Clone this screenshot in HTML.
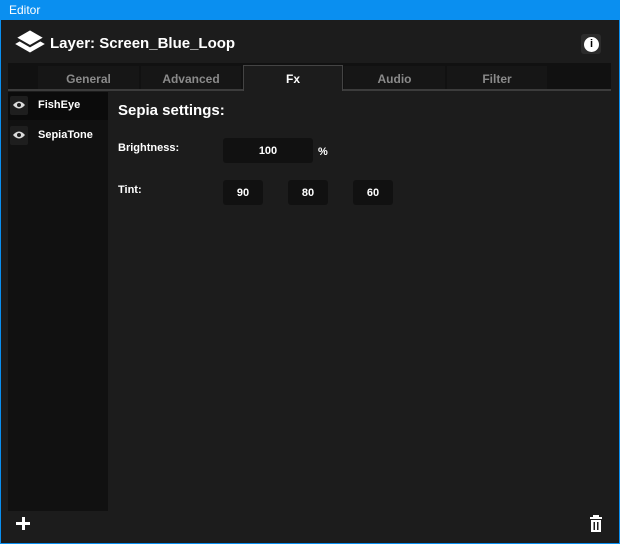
<!DOCTYPE html>
<html><head><style>
*{margin:0;padding:0;box-sizing:border-box}
body{width:620px;height:544px;background:#1c1c1c;font-family:"Liberation Sans",sans-serif;position:relative;overflow:hidden;color:#fff}
.a{position:absolute}
.frame{left:0;top:0;width:620px;height:544px;border:1px solid #0a8ff0;border-top:none}
.title{left:0;top:0;width:620px;height:20px;background:#0a8ff0;font-size:12px;line-height:20px;padding-left:9px}
.tab{top:66px;height:24px;background:#161616;color:#8a8a8a;font-size:12px;font-weight:bold;text-align:center;line-height:26px}
.box{background:#111;border-radius:3px;font-size:11px;text-align:center;font-weight:bold}
.lbl{font-size:11px;font-weight:bold}
</style></head><body>
<div class="a title">Editor</div>
<div class="a frame"></div>
<svg class="a" style="left:12px;top:29px" width="36" height="30" viewBox="0 0 34 28"><path d="M17 6 L31 14 L17 22 L3 14Z" fill="#fff"/><path d="M17 0 L31 8 L17 16 L3 8Z" fill="#fff" stroke="#1c1c1c" stroke-width="2"/></svg>
<div class="a" style="left:50px;top:35px;font-size:15px;font-weight:bold">Layer: Screen_Blue_Loop</div>
<div class="a" style="left:581px;top:34px;width:20px;height:20px;background:#2c2c2c;border-radius:3px"></div>
<div class="a" style="left:584px;top:37px;width:15px;height:15px;background:#fff;border-radius:50%;color:#000;font-size:11px;font-weight:bold;text-align:center;line-height:15px">i</div>
<div class="a" style="left:8px;top:63px;width:603px;height:27px;background:#111"></div>
<div class="a tab" style="left:38px;width:101px">General</div>
<div class="a tab" style="left:141px;width:100px">Advanced</div>
<div class="a tab" style="left:344px;width:101px">Audio</div>
<div class="a tab" style="left:447px;width:100px">Filter</div>
<div class="a" style="left:8px;top:89px;width:603px;height:2px;background:#3c3c3c"></div>
<div class="a" style="left:243px;top:65px;width:100px;height:26px;background:#1c1c1c;border:1px solid #444;border-bottom:none;font-size:12px;font-weight:bold;text-align:center;line-height:27px">Fx</div>
<div class="a" style="left:8px;top:92px;width:100px;height:419px;background:#111"></div>
<div class="a" style="left:8px;top:92px;width:100px;height:28px;background:#0b0b0b"></div>
<div class="a" style="left:10px;top:96px;width:18px;height:19px;background:#1e1e1e;border-radius:2px"></div>
<div class="a" style="left:10px;top:126px;width:18px;height:19px;background:#1e1e1e;border-radius:2px"></div>
<svg class="a" style="left:12px;top:100px" width="14" height="10" viewBox="0 0 14 10"><path d="M1 5 Q7 -2 13 5 Q7 12 1 5Z" fill="#ddd"/><circle cx="7" cy="5" r="2" fill="#1e1e1e"/></svg>
<svg class="a" style="left:12px;top:130px" width="14" height="10" viewBox="0 0 14 10"><path d="M1 5 Q7 -2 13 5 Q7 12 1 5Z" fill="#ddd"/><circle cx="7" cy="5" r="2" fill="#1e1e1e"/></svg>
<div class="a lbl" style="left:38px;top:99px">FishEye</div>
<div class="a lbl" style="left:38px;top:129px">SepiaTone</div>
<div class="a" style="left:118px;top:102px;font-size:15px;font-weight:bold">Sepia settings:</div>
<div class="a lbl" style="left:118px;top:142px">Brightness:</div>
<div class="a box" style="left:223px;top:138px;width:90px;height:25px;line-height:26px">100</div>
<div class="a lbl" style="left:318px;top:146px">%</div>
<div class="a lbl" style="left:118px;top:184px">Tint:</div>
<div class="a box" style="left:223px;top:180px;width:40px;height:25px;line-height:26px">90</div>
<div class="a box" style="left:288px;top:180px;width:40px;height:25px;line-height:26px">80</div>
<div class="a box" style="left:353px;top:180px;width:40px;height:25px;line-height:26px">60</div>
<div class="a" style="left:16px;top:522px;width:14px;height:3px;background:#fff"></div>
<div class="a" style="left:21.5px;top:517px;width:3px;height:13px;background:#fff"></div>
<svg class="a" style="left:589px;top:515px" width="14" height="17" viewBox="0 0 14 17"><rect x="4" y="0" width="6" height="2" fill="#fff"/><rect x="1" y="2" width="12" height="2" fill="#fff"/><path d="M2 5 H12 V17 H2Z M4.5 7 V15 H6 V7Z M8 7 V15 H9.5 V7Z" fill="#fff" fill-rule="evenodd"/></svg>
</body></html>
